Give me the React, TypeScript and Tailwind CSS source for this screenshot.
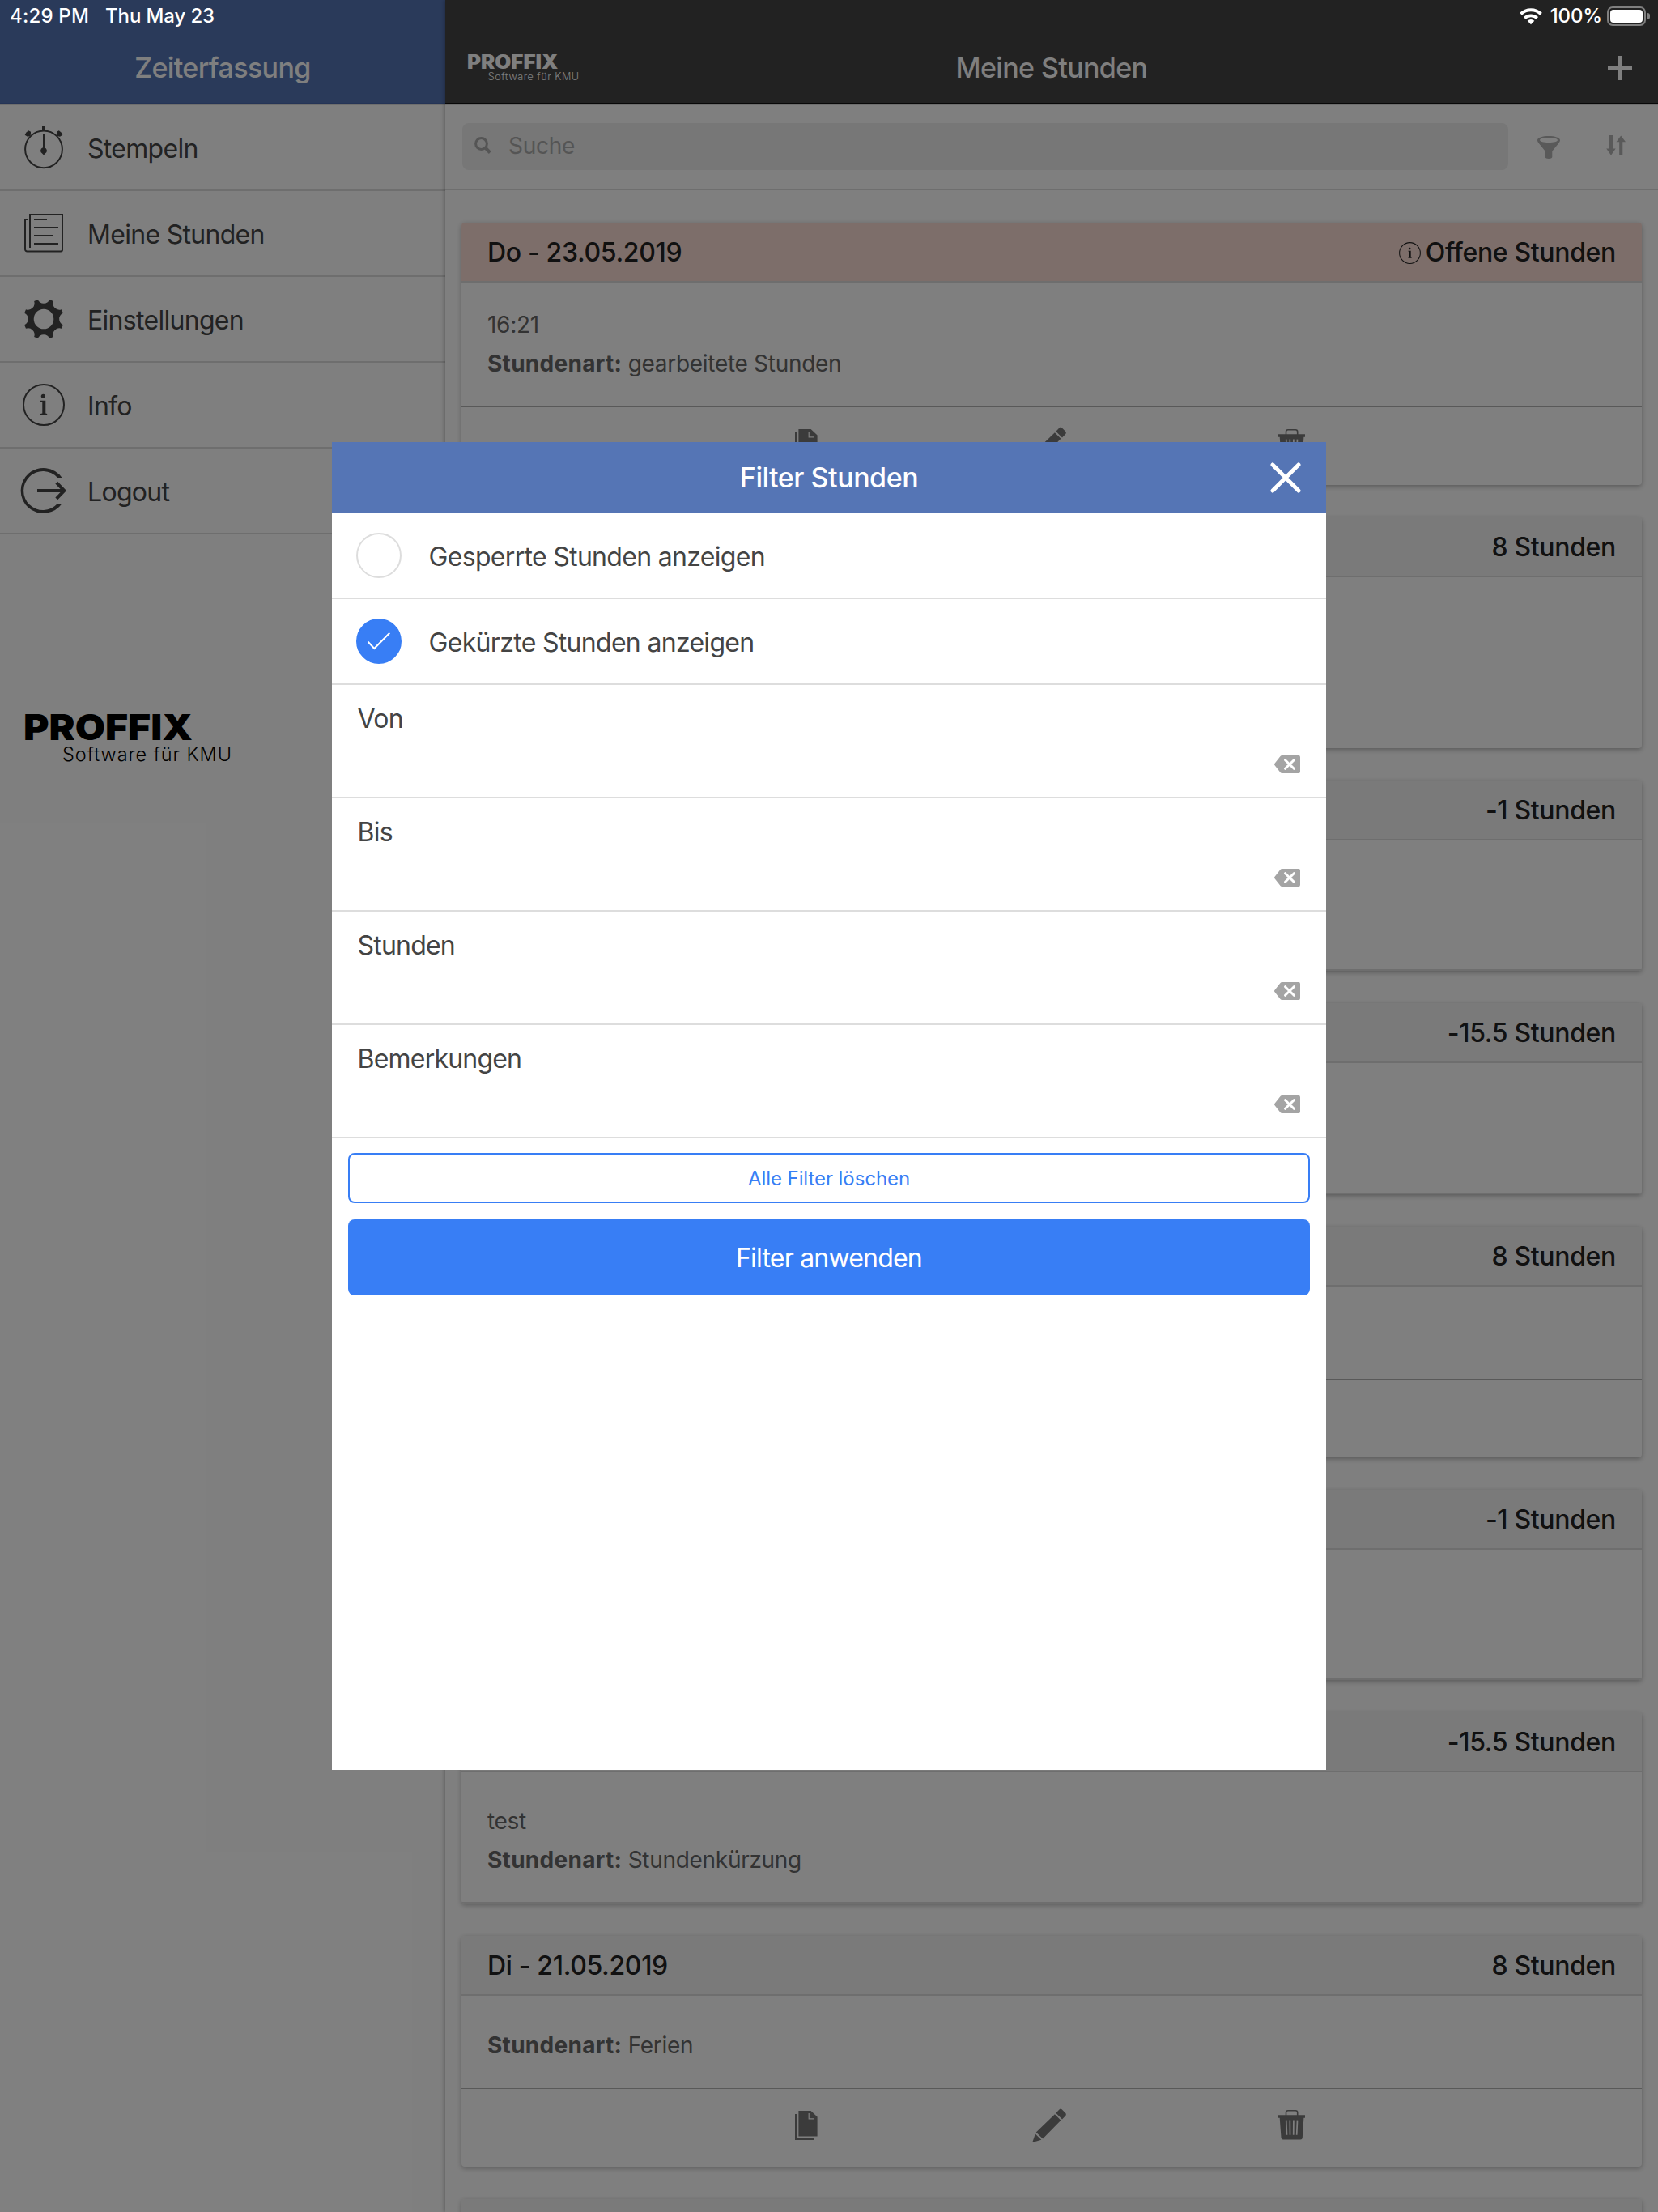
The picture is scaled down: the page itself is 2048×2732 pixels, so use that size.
import React, { useState } from 'react';
import clsx from 'clsx';

interface IconProps {
  className?: string;
}

interface MenuItem {
  label: string;
  icon: React.FC<IconProps>;
}

interface Entry {
  id: number;
  title?: string;
  hours: string;
  open?: boolean;
  note?: string;
  kind?: string;
  editable?: boolean;
}

/* ---------- Icons ---------- */

const StopwatchIcon: React.FC<IconProps> = ({ className }) => (
  <svg viewBox="0 0 64 64" className={className} fill="currentColor">
    <circle cx="32" cy="34.3" r="22.9" fill="none" stroke="currentColor" strokeWidth="2" />
    <path d="M30 6h4v5.5h-4zM31 16h2v16.2a4 4 0 0 1 .9 7.3L32 41.5l-1.9-2a4 4 0 0 1 .9-7.3z" />
    <path d="M13.2 11.2L16 12.8V16l-.8 2-3.2.7-3.3-1.9 1.5-3zM50.8 11.2L48 12.8V16l.8 2 3.2.7 3.3-1.9-1.5-3z" />
  </svg>
);

const PaperIcon: React.FC<IconProps> = ({ className }) => (
  <svg viewBox="0 0 64 64" className={className} fill="none" stroke="currentColor" strokeWidth="2">
    <path d="M15 50V9h40v43.5a2 2 0 0 1-2 2H11.5a2.5 2.5 0 0 1-2.5-2.5V15h3" />
    <path d="M20 15h16M20 25h30M20 35h24M20 45h30" />
  </svg>
);

const GearIcon: React.FC<IconProps> = ({ className }) => (
  <svg viewBox="0 0 64 64" className={className} fill="currentColor" fillRule="evenodd">
    <path d="M39.3 8.1L43.85 10A8 8 0 0 0 54 20.15L55.9 24.7A8 8 0 0 0 55.9 39.3L54 43.85A8 8 0 0 0 43.85 54L39.3 55.9A8 8 0 0 0 24.7 55.9L20.15 54A8 8 0 0 0 10 43.85L8.1 39.3A8 8 0 0 0 8.1 24.7L10 20.15A8 8 0 0 0 20.15 10L24.7 8.1A8 8 0 0 0 39.3 8.1ZM32 19.7A12.3 12.3 0 1 0 32 44.3A12.3 12.3 0 1 0 32 19.7Z" />
  </svg>
);

const InfoIcon: React.FC<IconProps> = ({ className }) => (
  <svg viewBox="0 0 64 64" className={className} fill="currentColor">
    <circle cx="32" cy="32" r="25" fill="none" stroke="currentColor" strokeWidth="2" />
    <circle cx="31.4" cy="21.3" r="2.6" />
    <path d="M28 26.8h6.3v15.6l1.9.6v1.2H28V43l2.3-.6V28.6l-2.3-.6z" />
  </svg>
);

const LogoutIcon: React.FC<IconProps> = ({ className }) => (
  <svg viewBox="0 0 64 64" className={className} fill="none" stroke="currentColor" strokeWidth="4">
    <path
      d="M54.6 16H49A24 24 0 1 0 49 48H54.6A28 28 0 1 1 54.6 16Z"
      fill="currentColor"
      stroke="none"
    />
    <path d="M24 32h33M47.8 22.2L57.3 32l-9.5 9.8" />
  </svg>
);

const SearchIcon: React.FC<IconProps> = ({ className }) => (
  <svg viewBox="0 0 21 21" className={className} fill="none" stroke="currentColor">
    <circle cx="8.5" cy="8.5" r="6.9" strokeWidth="3" />
    <path d="M13 13l6.3 6.5" strokeWidth="4" />
  </svg>
);

const FunnelIcon: React.FC<IconProps> = ({ className }) => (
  <svg viewBox="0 0 28 28" className={className} fill="currentColor" fillRule="evenodd">
    <path d="M14 0C21.6 0 28 2 28 5c0 1.5-.7 2.5-1.8 3.900l-7.300 9c-.6.7-.6 1.2-.6 2V26c0 1-2 2-4.300 2s-4.300-1-4.300-2v-6.100c0-.8 0-1.300-.6-2l-7.300-9C.7 7.5 0 6.5 0 5 0 2 6.4 0 14 0zm0 2C7.8 2 3 3.300 3 5s4.800 3 11 3 11-1.300 11-3-4.800-3-11-3z" />
  </svg>
);

const SortIcon: React.FC<IconProps> = ({ className }) => (
  <svg viewBox="0 0 24 25" className={className} fill="currentColor">
    <path d="M4 0h4v16.5h3.7L6 24.7.2 16.5H4zM16.2 25V8.3h-3.7L18.2.5 24 8.3h-3.7V25z" />
  </svg>
);

const CopyIcon: React.FC<IconProps> = ({ className }) => (
  <svg viewBox="0 0 28 36" className={className} fill="currentColor">
    <path d="M0 4h3v29h20v3H0zM4.4 0h15.2l8 7.5v24H4.4z" />
    <path d="M17.2 3v6.8h6.6" fill="none" stroke="#fff" strokeWidth="1.2" />
  </svg>
);

const PencilIcon: React.FC<IconProps> = ({ className }) => (
  <svg viewBox="0 0 42 42" className={className} fill="currentColor">
    <path d="M29.3 5.8l4.4-4.6q1.4-1.2 2.9 0l4.5 4.6q1.4 1.5.2 3.1L37 13.4zM27.9 7.2l7.5 7.6-22.3 22.6-8.3-7.9zM3.8 31.5l7.5 7.3L.2 42z" />
  </svg>
);

const TrashIcon: React.FC<IconProps> = ({ className }) => (
  <svg viewBox="0 0 33 37" className={className} fill="currentColor">
    <path d="M9.5 7V3.2q0-2.4 2.4-2.4h9.4q2.4 0 2.4 2.4V7" fill="none" stroke="currentColor" strokeWidth="1.6" />
    <path d="M0 6.3h33v3.4h-1.6l-1.6 24.5q-.2 2.3-2.5 2.3H6q-2.3 0-2.5-2.3L1.7 9.7H0z" />
    <path d="M9.7 12.6l.8 18.200M14.3 12.6l.2 18.200M18.900 12.6l-.2 18.200M23.5 12.6l-.8 18.200" stroke="#fff" strokeWidth="1.7" />
  </svg>
);

const BackspaceIcon: React.FC<IconProps> = ({ className }) => (
  <svg viewBox="0 0 32 22" className={className}>
    <path d="M9.5 0H30q2 0 2 2v18q0 2-2 2H9.5q-1.2 0-2-.9L.4 12q-.8-1 0-2L7.5.9Q8.3 0 9.5 0z" fill="#a4a4a4" />
    <path d="M13.5 5.7l10.800 10.6M24.3 5.7L13.5 16.3" stroke="#fff" strokeWidth="3" strokeLinecap="round" />
  </svg>
);

const WifiIcon: React.FC<IconProps> = ({ className }) => (
  <svg viewBox="0 0 28 21" className={className} fill="none" stroke="currentColor">
    <path d="M1.5 7.3a18 18 0 0 1 25 0" strokeWidth="4" />
    <path d="M6.2 12.4a11.3 11.3 0 0 1 15.6 0" strokeWidth="3.7" />
    <path d="M14 20.3l-4.3-4.5a6.2 6.2 0 0 1 8.6 0z" fill="currentColor" stroke="none" />
  </svg>
);

/* Wordmark, shared by the side menu and the navbar */
const Logo: React.FC<IconProps> = ({ className }) => (
  <svg viewBox="0 -10 266 78" className={clsx("overflow-visible font-['Inter']", className)} fill="currentColor">
    <text x="0" y="34" fontSize="44" fontWeight="900" textLength="209" lengthAdjust="spacingAndGlyphs">
      PROFFIX
    </text>
    <text x="48" y="60" fontSize="23.5" fontWeight="300" textLength="209" lengthAdjust="spacing">
      Software für KMU
    </text>
  </svg>
);

/* ---------- Data ---------- */

const menuItems: MenuItem[] = [
  { label: 'Stempeln', icon: StopwatchIcon },
  { label: 'Meine Stunden', icon: PaperIcon },
  { label: 'Einstellungen', icon: GearIcon },
  { label: 'Info', icon: InfoIcon },
  { label: 'Logout', icon: LogoutIcon },
];

const entries: Entry[] = [
  { id: 1, title: 'Do - 23.05.2019', hours: 'Offene Stunden', open: true, note: '16:21', kind: 'gearbeitete Stunden', editable: true },
  { id: 2, hours: '8 Stunden', editable: true },
  { id: 3, hours: '-1 Stunden' },
  { id: 4, hours: '-15.5 Stunden' },
  { id: 5, hours: '8 Stunden', editable: true },
  { id: 6, hours: '-1 Stunden' },
  { id: 7, hours: '-15.5 Stunden', note: 'test', kind: 'Stundenkürzung' },
  { id: 8, title: 'Di - 21.05.2019', hours: '8 Stunden', kind: 'Ferien', editable: true },
  { id: 9, hours: '' },
];

const filterFields = ['Von', 'Bis', 'Stunden', 'Bemerkungen'];

/* ---------- Parts ---------- */

const StatusBar = () => (
  <div className="absolute inset-x-0 top-0 flex h-10 items-center justify-between pl-[12px] pr-[10px] text-[24px] font-medium text-white">
    <div className="flex gap-5">
      <span className="tracking-[0.2px]">4:29 PM</span>
      <span className="tracking-[-0.12px]">Thu May 23</span>
    </div>
    <div className="flex items-center">
      <WifiIcon className="mr-[10px] h-[21px] w-[28px]" />
      <span className="mr-[6px] tracking-[-0.15px]">100%</span>
      <div className="h-6 w-12 rounded-[7px] border-2 border-[#808080] p-[2px]">
        <div className="h-full w-full rounded-[4px] bg-white" />
      </div>
      <div className="ml-[2px] h-2 w-[3px] rounded-r-full bg-[#808080]" />
    </div>
  </div>
);

const SideMenu = () => (
  <aside className="flex w-[550px] shrink-0 flex-col">
    <header className="flex h-32 items-end justify-center border-b border-[#4a69ad] bg-[#5575b5] pt-10">
      <h1 className="text-[34px] font-medium leading-[87px] tracking-[-0.62px] text-white">Zeiterfassung</h1>
    </header>
    <nav className="border-t-2 border-[#ddd]">
      {menuItems.map(({ label, icon: Icon }) => (
        <a key={label} className="flex h-[106px] items-center border-b-2 border-[#ddd] pl-[22px] text-[#444]">
          <Icon className="h-16 w-16" />
          <span className="ml-[22px] pt-[3px] text-[32px] tracking-[-0.7px]">{label}</span>
        </a>
      ))}
    </nav>
    <Logo className="ml-[29px] mt-[210px] h-[78px] w-[266px] text-black" />
  </aside>
);

const EntryCard: React.FC<{ entry: Entry }> = ({ entry }) => (
  <article
    className={clsx(
      'flex shrink-0 flex-col overflow-hidden rounded-[4px] bg-white shadow-[0_2px_6px_rgba(0,0,0,0.3)]',
      entry.open ? 'h-[324px]' : entry.editable ? 'h-[284.7px]' : 'h-[235.7px]'
    )}
  >
    <div
      className={clsx(
        'flex h-[74px] shrink-0 items-center justify-between border-b-2 border-[#ddd] px-8 pt-[2px] text-[32px] font-medium tracking-[-0.34px] text-[#222]',
        entry.open ? 'bg-[#fadcd4]' : 'bg-[#f5f5f5]'
      )}
    >
      <span>{entry.title}</span>
      <span className="flex items-center">
        {entry.open && <InfoIcon className="mr-[3px] h-[33px] w-[33px]" />}
        {entry.hours}
      </span>
    </div>
    <div
      className={clsx(
        'flex flex-1 flex-col justify-end px-8 text-[28px] leading-[48px] tracking-[-0.3px] text-[#666]',
        entry.editable ? 'pb-[29px]' : 'border-b-2 border-[#ddd] pb-[28px]'
      )}
    >
      {entry.note && <p>{entry.note}</p>}
      {entry.kind && (
        <p>
          <b className="font-bold tracking-[0.28px]">Stundenart:</b> {entry.kind}
        </p>
      )}
    </div>
    {entry.editable && (
      <div className="flex h-[97px] shrink-0 items-center justify-center border-t border-[#b2b2b2] pb-[6px] text-[#777]">
        <div className="flex w-[300px] justify-center pr-[7px]">
          <CopyIcon className="h-9 w-7" />
        </div>
        <div className="flex w-[300px] justify-center pr-[6px]">
          <PencilIcon className="h-[42px] w-[42px]" />
        </div>
        <div className="flex w-[300px] justify-center pr-[7px]">
          <TrashIcon className="h-[37px] w-[33px]" />
        </div>
      </div>
    )}
  </article>
);

const HoursView = () => (
  <main className="flex min-w-0 flex-1 flex-col bg-white shadow-[-2px_0_4px_rgba(0,0,0,0.2)]">
    <header className="grid h-32 shrink-0 grid-cols-[1fr_auto_1fr] items-center border-b border-[#111] bg-[#444] px-[27px] pt-10 text-white">
      <Logo className="mb-[3px] h-[42px] w-[143px]" />
      <h1 className="text-[34px] font-medium tracking-[-0.62px]">Meine Stunden</h1>
      <svg viewBox="0 0 30 30" className="mr-[5px] h-[30px] w-[30px] justify-self-end" stroke="currentColor" strokeWidth="5.5">
        <path d="M15 0v30M0 15h30" />
      </svg>
    </header>
    <div className="flex h-[107px] shrink-0 items-center border-y-2 border-[#ddd] pb-px pl-[21px] pr-10 text-[#b2b2b2]">
      <div className="flex h-[58px] flex-1 items-center rounded-[8px] bg-[#eee] pb-[3px] pl-[15px] text-[#aaa]">
        <SearchIcon className="h-[21px] w-[21px]" />
        <span className="ml-[21px] text-[28px] tracking-[-0.27px]">Suche</span>
      </div>
      <FunnelIcon className="ml-9 mt-[2px] h-7 w-7" />
      <SortIcon className="mb-[4px] ml-[57px] h-[25px] w-6" />
    </div>
    <div className="flex flex-1 flex-col gap-10 overflow-hidden px-5 pt-10">
      {entries.map((entry) => (
        <EntryCard key={entry.id} entry={entry} />
      ))}
    </div>
  </main>
);

const FilterModal = () => {
  const [locked, setLocked] = useState(false);
  const [reduced, setReduced] = useState(true);

  const toggles = [
    { label: 'Gesperrte Stunden anzeigen', checked: locked, toggle: () => setLocked(!locked) },
    { label: 'Gekürzte Stunden anzeigen', checked: reduced, toggle: () => setReduced(!reduced) },
  ];

  return (
    <section className="absolute inset-[20%] flex flex-col bg-white">
      <header className="grid h-[88px] shrink-0 grid-cols-[1fr_auto_1fr] items-center border-b border-[#4a69ad] bg-[#5575b5] text-white">
        <span />
        <h2 className="text-[34px] font-medium tracking-[-0.48px]">Filter Stunden</h2>
        <svg viewBox="0 0 38 38" className="mr-[31px] h-[38px] w-[38px] justify-self-end" stroke="currentColor" strokeWidth="5" strokeLinecap="round">
          <path d="M3 3l32 32M35 3L3 35" />
        </svg>
      </header>

      {toggles.map(({ label, checked, toggle }) => (
        <label key={label} onClick={toggle} className="flex h-[106px] shrink-0 items-center border-b-2 border-[#ddd] pl-[30px] text-[#444]">
          <span
            className={clsx(
              'flex h-14 w-14 items-center justify-center rounded-full border-2',
              checked ? 'border-[#387ef5] bg-[#387ef5]' : 'border-[#ddd] bg-white'
            )}
          >
            {checked && (
              <svg viewBox="0 0 28 22" className="h-[22px] w-7" fill="none" stroke="#fff" strokeWidth="2">
                <path d="M.7 11.7l7.6 8.3L27.3.7" />
              </svg>
            )}
          </span>
          <span className="ml-[34px] pt-[3px] text-[32px] tracking-[-0.69px]">{label}</span>
        </label>
      ))}

      {filterFields.map((field) => (
        <div key={field} className="flex h-[140px] shrink-0 items-start justify-between border-b-2 border-[#ddd] pl-8 pr-8 pt-5 text-[#444]">
          <span className="mt-[2px] text-[32px] leading-[40px] tracking-[-0.8px]">{field}</span>
          <BackspaceIcon className="mt-[67px] h-[22px] w-8" />
        </div>
      ))}

      <div className="flex flex-col gap-5 px-5 pt-[18px]">
        <button className="h-[62px] rounded-[8px] border-2 border-[#387ef5] pt-[2px] text-[24px] tracking-[-0.07px] text-[#387ef5]">
          Alle Filter löschen
        </button>
        <button className="h-[94px] rounded-[8px] bg-[#387ef5] pt-[2px] text-[32px] tracking-[-0.8px] text-white">
          Filter anwenden
        </button>
      </div>
    </section>
  );
};

export default function App() {
  return (
    <div className="relative h-[2732px] w-[2048px] overflow-hidden bg-white font-['Inter',sans-serif]">
      <div className="flex h-full">
        <SideMenu />
        <HoursView />
      </div>
      <div className="absolute inset-0 bg-black/50" />
      <StatusBar />
      <FilterModal />
    </div>
  );
}
